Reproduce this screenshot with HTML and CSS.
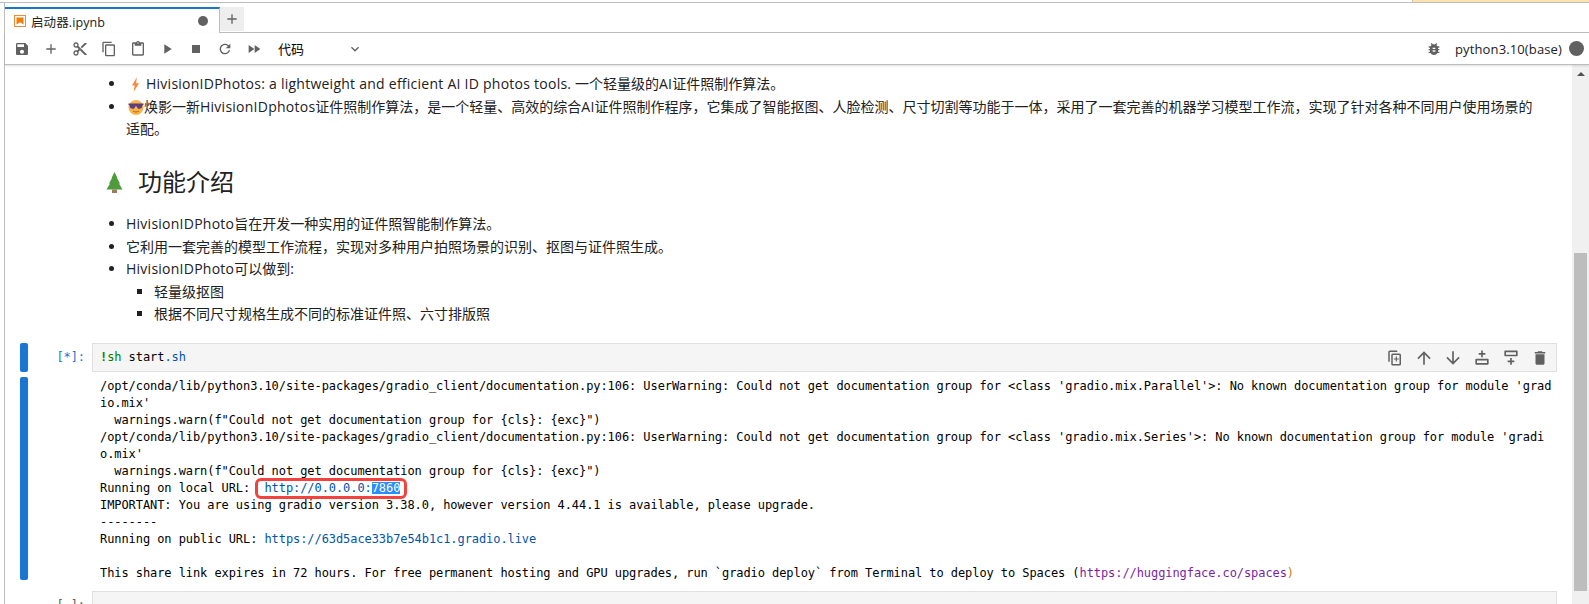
FILE: index.html
```html
<!DOCTYPE html>
<html lang="zh">
<head>
<meta charset="utf-8">
<title>启动器.ipynb</title>
<link rel="stylesheet" href="styles.css">
</head>
<body>
<div class="strip"><div class="strip-note"></div></div>
<div class="panel">
  <div class="tabbar">
    <div class="tab">
      <svg class="tab-icon" viewBox="0 0 12 12"><rect x="0.5" y="0.5" width="11" height="11" fill="#fff" stroke="#ef8a3c"/><path d="M2.5 2.5h7v7L6 7.2 2.5 9.5z" fill="#f57c00"/></svg>
      <span class="tab-title">启动器.ipynb</span>
      <span class="tab-dot"></span>
    </div>
    <div class="tab-add"><svg class="icon16" viewBox="0 0 24 24"><path d="M19 13h-6v6h-2v-6H5v-2h6V5h2v6h6v2z"/></svg></div>
  </div>
  <div class="toolbar">
    <span class="tool"><svg class="icon16" viewBox="0 0 24 24"><path d="M17 3H5c-1.11 0-2 .9-2 2v14c0 1.1.89 2 2 2h14c1.1 0 2-.9 2-2V7l-4-4zm-5 16c-1.66 0-3-1.34-3-3s1.34-3 3-3 3 1.34 3 3-1.34 3-3 3zm3-10H5V5h10v4z"/></svg></span>
    <span class="tool"><svg class="icon16" viewBox="0 0 24 24"><path d="M19 13h-6v6h-2v-6H5v-2h6V5h2v6h6v2z"/></svg></span>
    <span class="tool"><svg class="icon16" viewBox="0 0 24 24"><path d="M9.64 7.64c.23-.5.36-1.05.36-1.64 0-2.21-1.79-4-4-4S2 3.79 2 6s1.79 4 4 4c.59 0 1.14-.13 1.64-.36L10 12l-2.36 2.36C7.14 14.13 6.59 14 6 14c-2.21 0-4 1.79-4 4s1.79 4 4 4 4-1.79 4-4c0-.59-.13-1.14-.36-1.64L12 14l7 7h3v-1L9.64 7.64zM6 8c-1.1 0-2-.89-2-2s.9-2 2-2 2 .89 2 2-.9 2-2 2zm0 12c-1.1 0-2-.89-2-2s.9-2 2-2 2 .89 2 2-.9 2-2 2zm6-7.5c-.28 0-.5-.22-.5-.5s.22-.5.5-.5.5.22.5.5-.22.5-.5.5zM19 3l-6 6 2 2 7-7V3z"/></svg></span>
    <span class="tool"><svg class="icon16" viewBox="0 0 24 24"><path d="M16 1H4c-1.1 0-2 .9-2 2v14h2V3h12V1zm3 4H8c-1.1 0-2 .9-2 2v14c0 1.1.9 2 2 2h11c1.1 0 2-.9 2-2V7c0-1.1-.9-2-2-2zm0 16H8V7h11v14z"/></svg></span>
    <span class="tool"><svg class="icon16" viewBox="0 0 24 24"><path d="M19 2h-4.18C14.4.84 13.3 0 12 0c-1.3 0-2.4.84-2.82 2H5c-1.1 0-2 .9-2 2v16c0 1.1.9 2 2 2h14c1.1 0 2-.9 2-2V4c0-1.1-.9-2-2-2zm-7 0c.55 0 1 .45 1 1s-.45 1-1 1-1-.45-1-1 .45-1 1-1zm7 18H5V4h2v3h10V4h2v16z"/></svg></span>
    <span class="tool"><svg class="icon16" viewBox="0 0 24 24"><path d="M8 5v14l11-7z"/></svg></span>
    <span class="tool"><svg class="icon16" viewBox="0 0 24 24"><path d="M6 6h12v12H6z"/></svg></span>
    <span class="tool"><svg class="icon16" viewBox="0 0 24 24"><path d="M17.65 6.35C16.2 4.9 14.21 4 12 4c-4.42 0-7.99 3.58-7.99 8s3.57 8 7.99 8c3.73 0 6.84-2.55 7.73-6h-2.08c-.82 2.33-3.04 4-5.65 4-3.31 0-6-2.69-6-6s2.69-6 6-6c1.66 0 3.14.69 4.22 1.78L13 11h7V4l-2.35 2.35z"/></svg></span>
    <span class="tool"><svg class="icon16" viewBox="0 0 24 24"><path d="M4 18l8.5-6L4 6v12zm9-12v12l8.5-6L13 6z"/></svg></span>
    <span class="celltype">代码<svg class="icon16 chevron" viewBox="0 0 24 24"><path d="M7.41 8.59 12 13.17l4.59-4.58L18 10l-6 6-6-6z"/></svg></span>
    <span class="spacer"></span>
    <svg class="icon16 bug" viewBox="0 0 24 24"><path d="M20 8h-2.81c-.45-.78-1.07-1.45-1.82-1.96L17 4.41 15.59 3l-2.17 2.17C12.96 5.06 12.49 5 12 5c-.49 0-.96.06-1.41.17L8.41 3 7 4.41l1.62 1.63C7.88 6.55 7.26 7.22 6.81 8H4v2h2.09c-.05.33-.09.66-.09 1v1H4v2h2v1c0 .34.04.67.09 1H4v2h2.81c1.04 1.79 2.97 3 5.19 3s4.15-1.21 5.19-3H20v-2h-2.09c.05-.33.09-.66.09-1v-1h2v-2h-2v-1c0-.34-.04-.67-.09-1H20V8zm-6 8h-4v-2h4v2zm0-4h-4v-2h4v2z"/></svg>
    <span class="kernel">python3.10(base)</span>
    <span class="kernel-dot"></span>
  </div>
  <div class="body">
    <div class="notebook">
      <div class="markdown">
        <ul class="list list-top">
          <li><svg class="emoji bolt" viewBox="0 0 10 16"><path d="M6.5 0 1 9h3l-1 7 6-9.500H5.700z" fill="#f58b42"/></svg><span class="latin">HivisionIDPhotos: a lightweight and efficient AI ID photos tools.</span> 一个轻量级的<span class="latin">AI</span>证件照制作算法。</li>
          <li><svg class="emoji shades" viewBox="0 0 16 16"><circle cx="8" cy="8.500" r="7.500" fill="#f9b44c"/><path d="M.5 4.500h15v1.500l-1 .3c-.3 2.700-1.500 3.500-3 3.500-1.700 0-2.500-1-2.900-2.600H7.400C7 8.800 6.200 9.800 4.500 9.800c-1.500 0-2.700-.8-3-3.500l-1-.3z" fill="#5c3f7c"/><path d="M5 12c1.800 1.300 4.200 1.300 6 0" stroke="#b5651d" fill="none"/></svg>焕影一新<span class="latin">HivisionIDphotos</span>证件照制作算法，是一个轻量、高效的综合<span class="latin">AI</span>证件照制作程序，它集成了智能抠图、人脸检测、尺寸切割等功能于一体，采用了一套完善的机器学习模型工作流，实现了针对各种不同用户使用场景的适配。</li>
        </ul>
        <h2 class="heading"><svg class="tree" viewBox="0 0 17 21"><path d="M8.500 0 11.500 6h-.5l3 5.500h-1l3.500 6H.5l3.500-6H3L6 6h-.5z" fill="#4f9a3c"/><rect x="6" y="17.500" width="5" height="3.500" fill="#9c7a5c"/></svg>功能介绍</h2>
        <ul class="list">
          <li><span class="latin">HivisionIDPhoto</span>旨在开发一种实用的证件照智能制作算法。</li>
          <li>它利用一套完善的模型工作流程，实现对多种用户拍照场景的识别、抠图与证件照生成。</li>
          <li><span class="latin">HivisionIDPhoto</span>可以做到:
            <ul class="sublist">
              <li>轻量级抠图</li>
              <li>根据不同尺寸规格生成不同的标准证件照、六寸排版照</li>
            </ul>
          </li>
        </ul>
      </div>
      <div class="cell">
        <div class="bar bar-input"></div>
        <div class="prompt">[*]:</div>
        <div class="input">
          <code class="code"><b class="bang">!</b><span class="green">sh</span> start<span class="blue">.sh</span></code>
          <div class="celltools">
            <span class="celltool"><svg class="icon18" viewBox="0 0 24 24"><path d="M15 2H5a2 2 0 0 0-2 2v13h2V4h10zm3 4H9a2 2 0 0 0-2 2v12a2 2 0 0 0 2 2h9a2 2 0 0 0 2-2V8a2 2 0 0 0-2-2zm0 14H9V8h9zm-5-10h1.500v2.500H17V14h-2.500v2.500H13V14h-2.500v-1.500H13z"/></svg></span>
            <span class="celltool"><svg class="icon20" viewBox="0 0 24 24"><path d="M4 12l1.410 1.410L11 7.830V20h2V7.830l5.580 5.590L20 12l-8-8-8 8z"/></svg></span>
            <span class="celltool"><svg class="icon20" viewBox="0 0 24 24"><path d="M20 12l-1.410-1.410L13 16.170V4h-2v12.170l-5.580-5.590L4 12l8 8 8-8z"/></svg></span>
            <span class="celltool"><svg class="icon20" viewBox="0 0 24 24"><path d="M11 3h2v3h3v2h-3v3h-2V8H8V6h3zM5 13h14a1 1 0 0 1 1 1v5a1 1 0 0 1-1 1H5a1 1 0 0 1-1-1v-5a1 1 0 0 1 1-1zm1 2v3h12v-3z"/></svg></span>
            <span class="celltool"><svg class="icon20" viewBox="0 0 24 24"><path d="M5 3h14a1 1 0 0 1 1 1v5a1 1 0 0 1-1 1H5a1 1 0 0 1-1-1V4a1 1 0 0 1 1-1zm1 2v3h12V5zM11 12h2v3h3v2h-3v3h-2v-3H8v-2h3z"/></svg></span>
            <span class="celltool"><svg class="icon18" viewBox="0 0 24 24"><path d="M6 19c0 1.100.9 2 2 2h8c1.100 0 2-.9 2-2V7H6v12zM19 4h-3.500l-1-1h-5l-1 1H5v2h14V4z"/></svg></span>
          </div>
        </div>
      </div>
      <div class="cell cell-output">
        <div class="bar bar-output"></div>
        <div class="prompt"></div>
<pre class="output">/opt/conda/lib/python3.10/site-packages/gradio_client/documentation.py:106: UserWarning: Could not get documentation group for &lt;class 'gradio.mix.Parallel'&gt;: No known documentation group for module 'grad
io.mix'
  warnings.warn(f"Could not get documentation group for {cls}: {exc}")
/opt/conda/lib/python3.10/site-packages/gradio_client/documentation.py:106: UserWarning: Could not get documentation group for &lt;class 'gradio.mix.Series'&gt;: No known documentation group for module 'gradi
o.mix'
  warnings.warn(f"Could not get documentation group for {cls}: {exc}")
Running on local URL:  <span class="local"><span class="link">http://0.0.0.0:</span><span class="sel">7860</span></span>
IMPORTANT: You are using gradio version 3.38.0, however version 4.44.1 is available, please upgrade.
--------
Running on public URL: <span class="link">https://63d5ace33b7e54b1c1.gradio.live</span>

This share link expires in 72 hours. For free permanent hosting and GPU upgrades, run `gradio deploy` from Terminal to deploy to Spaces (<span class="visited">https://huggingface.co/spaces</span><span class="paren">)</span></pre>
      </div>
      <div class="cell cell-next">
        <div class="bar bar-empty"></div>
        <div class="prompt prompt-idle">[ ]:</div>
        <div class="input input-empty"></div>
      </div>
    </div>
    <div class="scrollbar">
      <span class="scroll-up"></span>
      <span class="scroll-thumb"></span>
    </div>
  </div>
</div>
</body>
</html>
```
FILE: styles.css
```css
* { box-sizing: border-box; }
html, body { margin: 0; height: 604px; overflow: hidden; background: #fff; }
body { font-family: "Open Sans", "Noto Sans CJK SC", sans-serif; color: #212121; font-size: 14px; }

.strip { height: 3px; border-bottom: 1px solid #bdbdbd; display: flex; justify-content: flex-end; }
.strip-note { width: 177px; height: 2px; background: #fbe3b0; border-left: 1px solid #cfc4a8; }

.panel { margin-left: 4px; border-left: 1px solid #bdbdbd; height: 601px; display: flex; flex-direction: column; }

.tabbar { height: 30px; padding-top: 4px; display: flex; border-bottom: 1px solid #bdbdbd; flex: none; }
.tab { width: 215px; height: 26px; margin-bottom: -1px; border-top: 2px solid #1976d2; border-right: 1px solid #bdbdbd; background: #fff; display: flex; align-items: center; padding-left: 9px; position: relative; z-index: 1; }
.tab-icon { width: 12px; height: 12px; flex: none; }
.tab-title { margin-left: 5px; font-size: 12.500px; color: #212121; letter-spacing: .1px; }
.tab-dot { width: 10px; height: 10px; border-radius: 50%; background: #616161; margin-left: auto; margin-right: 11px; }
.tab-add { width: 24px; height: 24px; background: #eeeeee; display: flex; align-items: center; justify-content: center; }

.icon16 { width: 16px; height: 16px; fill: #616161; display: block; flex: none; }
.icon18 { width: 18px; height: 18px; fill: #616161; display: block; }
.icon20 { width: 20px; height: 20px; fill: #616161; display: block; }

.toolbar { height: 32px; flex: none; border-bottom: 1px solid #bdbdbd; box-shadow: 0 1px 2px rgba(0,0,0,.12); display: flex; align-items: center; padding-left: 2.500px; position: relative; z-index: 2; background: #fff; }
.tool { width: 29px; display: flex; justify-content: center; }
.celltype { display: flex; align-items: center; margin-left: 9.500px; width: 85px; font-size: 13px; color: #000; }
.chevron { margin-left: auto; }
.spacer { flex: 1; }
.bug { margin-right: 13px; }
.kernel { font-size: 13px; color: #212121; margin-right: 7px; letter-spacing: .13px; }
.kernel-dot { width: 15px; height: 15px; border-radius: 50%; background: #616161; margin-right: 5px; }

.body { flex: 1; min-height: 0; display: flex; }
.notebook { flex: 1; min-width: 0; overflow: hidden; padding-top: 8px; }
.scrollbar { width: 17px; flex: none; background: #f0f0f0; display: flex; flex-direction: column; align-items: center; }
.scroll-up { width: 0; height: 0; margin-top: 7px; border-left: 4px solid transparent; border-right: 4px solid transparent; border-bottom: 4px solid #505050; }
.scroll-thumb { width: 13px; height: 338px; margin-top: 177px; background: #bdbdbd; }

.markdown { padding-left: 87px; padding-right: 32px; height: 270px; line-height: 22.500px; }
.latin { letter-spacing: .25px; }
.list { margin: 0; padding-left: 34px; }
.list li::marker { font-size: 14px; }
.list-top { height: 67px; }
.sublist { margin: 0; padding-left: 28px; list-style: square; }
.emoji { display: inline-block; vertical-align: -3px; }
.bolt { width: 9px; height: 15px; margin: 0 6px 0 5px; }
.shades { width: 16px; height: 16px; margin: 0 0 0 2px; }
.heading { margin: 26px 0 15px; font-size: 24px; font-weight: 400; line-height: 32px; display: flex; align-items: center; color: #212121; }
.tree { width: 17px; height: 21px; margin: 0 15px 0 14px; }

.cell { display: flex; padding-left: 15px; margin-right: 15px; }
.bar { width: 8px; flex: none; border-radius: 2px; }
.bar-input { height: 29px; background: #1976d2; }
.bar-output { height: 203px; background: #1976d2; }
.bar-empty { height: 29px; }
.prompt { width: 64px; flex: none; font: 12px/29px "DejaVu Sans Mono", monospace; letter-spacing: -.07px; color: #1976d2; text-align: right; padding-right: 7px; }
.prompt-idle { color: #616161; }
.input { flex: 1; min-width: 0; height: 29px; background: #f5f5f5; border: 1px solid #e0e0e0; display: flex; align-items: center; padding-left: 7px; }
.input-empty { height: 60px; }
.code { font: 12px/17px "DejaVu Sans Mono", monospace; letter-spacing: -.07px; color: #000; }
.bang { color: #008000; font-weight: 700; }
.green { color: #008000; }
.blue { color: #0055aa; }
.celltools { margin-left: auto; display: flex; padding-right: 2px; }
.celltool { width: 29px; height: 20px; display: flex; align-items: center; justify-content: center; }

.cell-output { margin-top: 5px; height: 204px; }
.output { margin: 0; padding: 1px 0 0 8px; font: 12px/17px "DejaVu Sans Mono", monospace; letter-spacing: -.075px; color: #000; white-space: pre; }
.link { color: #0055aa; }
.visited { color: #7b1fa2; }
.paren { color: #b8860b; }
.local { position: relative; }
.local::after { content: ""; position: absolute; left: -9px; right: -7px; top: -3px; bottom: -4px; border: 3px solid #f4433f; border-radius: 6px; }
.sel { color: #fff; background: linear-gradient(#2a8cff, #2a8cff) center / 100% 12px no-repeat; }

.cell-next { margin-top: 10px; }
```
